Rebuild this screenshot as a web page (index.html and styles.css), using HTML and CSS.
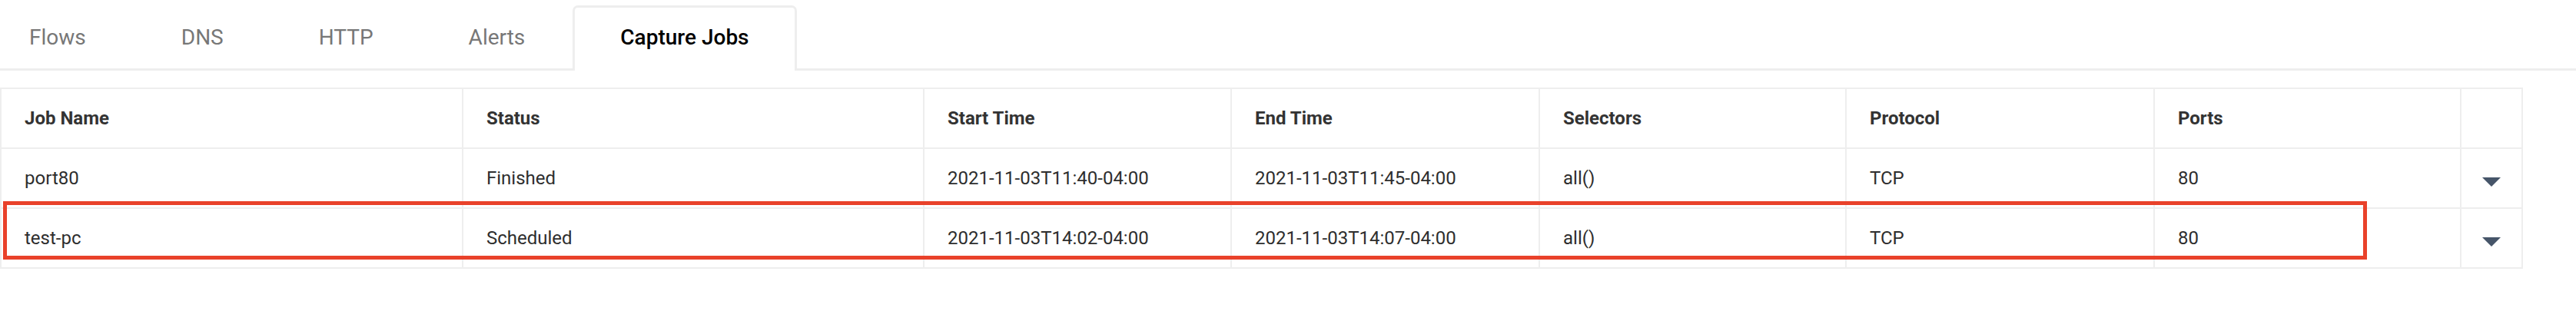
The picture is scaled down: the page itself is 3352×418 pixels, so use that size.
FILE: index.html
```html
<!DOCTYPE html>
<html lang="en">
<head>
<meta charset="utf-8">
<title>Capture Jobs</title>
<link rel="stylesheet" href="styles.css">
</head>
<body>
<div class="page">
  <nav class="tabs">
    <div class="tab">Flows</div>
    <div class="tab">DNS</div>
    <div class="tab">HTTP</div>
    <div class="tab">Alerts</div>
    <div class="tab active">Capture Jobs</div>
  </nav>
  <div class="table-wrap">
    <table class="jobs">
      <colgroup>
        <col class="c-wide"><col class="c-wide2"><col class="c-mid"><col class="c-mid2"><col class="c-mid3"><col class="c-mid2"><col class="c-mid3"><col class="c-act">
      </colgroup>
      <thead>
        <tr><th>Job Name</th><th>Status</th><th>Start Time</th><th>End Time</th><th>Selectors</th><th>Protocol</th><th>Ports</th><th></th></tr>
      </thead>
      <tbody>
        <tr><td>port80</td><td>Finished</td><td>2021-11-03T11:40-04:00</td><td>2021-11-03T11:45-04:00</td><td>all()</td><td>TCP</td><td>80</td><td class="act"><span class="caret"></span></td></tr>
        <tr><td>test-pc</td><td>Scheduled</td><td>2021-11-03T14:02-04:00</td><td>2021-11-03T14:07-04:00</td><td>all()</td><td>TCP</td><td>80</td><td class="act"><span class="caret"></span></td></tr>
      </tbody>
    </table>
    <div class="highlight"></div>
  </div>
</div>
</body>
</html>
```
FILE: styles.css
```css
html, body {
  margin: 0;
  padding: 0;
  background: #fff;
}
body {
  font-family: Roboto, "Liberation Sans", Arial, sans-serif;
  color: #333;
}
.page {
  width: 3352px;
}
.tabs {
  display: flex;
  margin-top: 7px;
  border-bottom: 3px solid #eeeeee;
  height: 82px;
}
.tab {
  box-sizing: border-box;
  height: 85px;
  padding: 0 59px;
  border: 3px solid transparent;
  border-bottom: none;
  font-size: 28px;
  line-height: 78px;
  color: #777;
}
.tab:first-child {
  padding-left: 35px;
}
.active {
  color: #000;
  font-weight: 500;
  background: #fff;
  border-color: #eeeeee;
  border-radius: 7px 7px 0 0;
  position: relative;
  z-index: 1;
}
.table-wrap {
  position: relative;
  margin-top: 22px;
  padding-right: 71px;
}
.jobs {
  width: 100%;
  border-collapse: collapse;
  table-layout: fixed;
  font-size: 24px;
}
.c-wide { width: 601px; }
.c-wide2 { width: 600px; }
.c-mid { width: 400px; }
.c-mid2 { width: 401px; }
.c-mid3 { width: 399px; }
.c-act { width: 80px; }
.jobs th,
.jobs td {
  border: 2px solid #eeeeee;
  height: 76px;
  padding: 0 30px;
  text-align: left;
  vertical-align: middle;
  white-space: nowrap;
}
.jobs th {
  font-weight: 700;
  color: #333;
}
.jobs td {
  color: #2e2e2e;
}
.jobs td.act {
  padding: 0;
  text-align: center;
}
.caret {
  display: inline-block;
  width: 0;
  height: 0;
  border-left: 12px solid transparent;
  border-right: 12px solid transparent;
  border-top: 12px solid #465569;
  margin-top: 7px;
  vertical-align: middle;
}
.highlight {
  position: absolute;
  left: 4px;
  top: 148px;
  width: 3066px;
  height: 66px;
  border: 5px solid #e9412a;
}
```
